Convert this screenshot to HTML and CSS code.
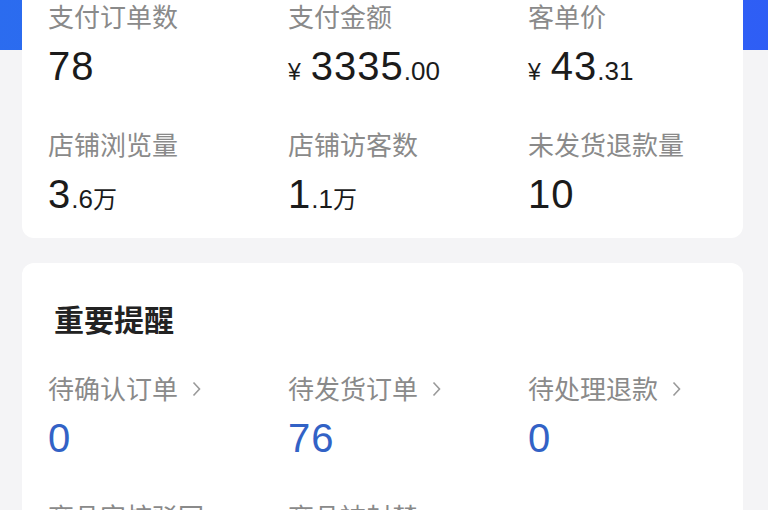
FILE: index.html
```html
<!DOCTYPE html>
<html>
  <head>
    <title>店铺数据</title>
    <meta charset="UTF-8" />
    <link rel="stylesheet" href="styles.css">
  </head>
  <body>
    <div class="page">

      <section class="card stats">
        <div class="grid">
          <div class="cell">
            <div class="label">支付订单数</div>
            <div class="value"><span class="num">78</span></div>
          </div>
          <div class="cell">
            <div class="label">支付金额</div>
            <div class="value"><span class="cur">¥</span><span class="num">3335</span><span class="dec">.00</span></div>
          </div>
          <div class="cell">
            <div class="label">客单价</div>
            <div class="value"><span class="cur">¥</span><span class="num">43</span><span class="dec">.31</span></div>
          </div>
          <div class="cell">
            <div class="label">店铺浏览量</div>
            <div class="value"><span class="num">3</span><span class="dec">.6</span><span class="unit">万</span></div>
          </div>
          <div class="cell">
            <div class="label">店铺访客数</div>
            <div class="value"><span class="num">1</span><span class="dec">.1</span><span class="unit">万</span></div>
          </div>
          <div class="cell">
            <div class="label">未发货退款量</div>
            <div class="value"><span class="num">10</span></div>
          </div>
        </div>
      </section>

      <section class="card remind">
        <h2 class="title">重要提醒</h2>
        <div class="grid">
          <a class="cell" href="#">
            <div class="label">待确认订单<svg class="chev" width="9" height="16" viewBox="0 0 9 16"><polyline points="1.5,1.5 7.5,8 1.5,14.5"/></svg></div>
            <div class="value link"><span class="num">0</span></div>
          </a>
          <a class="cell" href="#">
            <div class="label">待发货订单<svg class="chev" width="9" height="16" viewBox="0 0 9 16"><polyline points="1.5,1.5 7.5,8 1.5,14.5"/></svg></div>
            <div class="value link"><span class="num">76</span></div>
          </a>
          <a class="cell" href="#">
            <div class="label">待处理退款<svg class="chev" width="9" height="16" viewBox="0 0 9 16"><polyline points="1.5,1.5 7.5,8 1.5,14.5"/></svg></div>
            <div class="value link"><span class="num">0</span></div>
          </a>
          <a class="cell" href="#">
            <div class="label">商品审核驳回<svg class="chev" width="9" height="16" viewBox="0 0 9 16"><polyline points="1.5,1.5 7.5,8 1.5,14.5"/></svg></div>
            <div class="value link"><span class="num">0</span></div>
          </a>
          <a class="cell" href="#">
            <div class="label">商品被封禁<svg class="chev" width="9" height="16" viewBox="0 0 9 16"><polyline points="1.5,1.5 7.5,8 1.5,14.5"/></svg></div>
            <div class="value link"><span class="num">0</span></div>
          </a>
        </div>
      </section>

    </div>
  </body>
</html>
```

FILE: styles.css
```css
html {
  height: 100%;
}
body {
  margin: 0;
  height: 100%;
  overflow: hidden;
  font-family: "Noto Sans CJK SC", sans-serif;
  background: #f4f4f6;
}

.page {
  padding: 0 25px 0 22px;
  background: linear-gradient(#f4f4f6, #f4f4f6) 0 66px / 100% 100% no-repeat,
    linear-gradient(100deg, #2b6cef, #2f5cf6);
}

.card {
  background: #fff;
  border-radius: 12px;
}
.stats {
  margin-top: -16px;
  padding: 16px 0 22px 26px;
}
.remind {
  margin-top: 25px;
  padding: 35px 0 40px 26px;
}

.title {
  margin: 0 0 34px 6px;
  font-size: 30px;
  line-height: 40px;
  font-weight: 700;
  color: #222;
}

.grid {
  display: grid;
  grid-template-columns: repeat(3, 240px);
  row-gap: 40px;
}
.cell {
  display: flex;
  flex-direction: column;
  row-gap: 12px;
  text-decoration: none;
}

.label {
  display: flex;
  align-items: center;
  column-gap: 14px;
  height: 32px;
  font-size: 26px;
  line-height: 32px;
  color: #8a8a8a;
  white-space: nowrap;
}
.chev {
  fill: none;
  stroke: #9a9a9a;
  stroke-width: 1.6;
  margin-top: 1px;
}

.value {
  display: flex;
  align-items: baseline;
  height: 44px;
  line-height: 44px;
  color: #1b1b1b;
  font-family: "Liberation Sans", Arial, sans-serif;
}
.value.link {
  color: #3262c6;
}
.num {
  font-size: 40px;
  letter-spacing: 1px;
}
.cur {
  font-size: 23px;
  margin-right: 10px;
}
.dec {
  font-size: 26px;
}
.unit {
  font-family: "Noto Sans CJK SC", sans-serif;
  font-size: 24px;
}
```
